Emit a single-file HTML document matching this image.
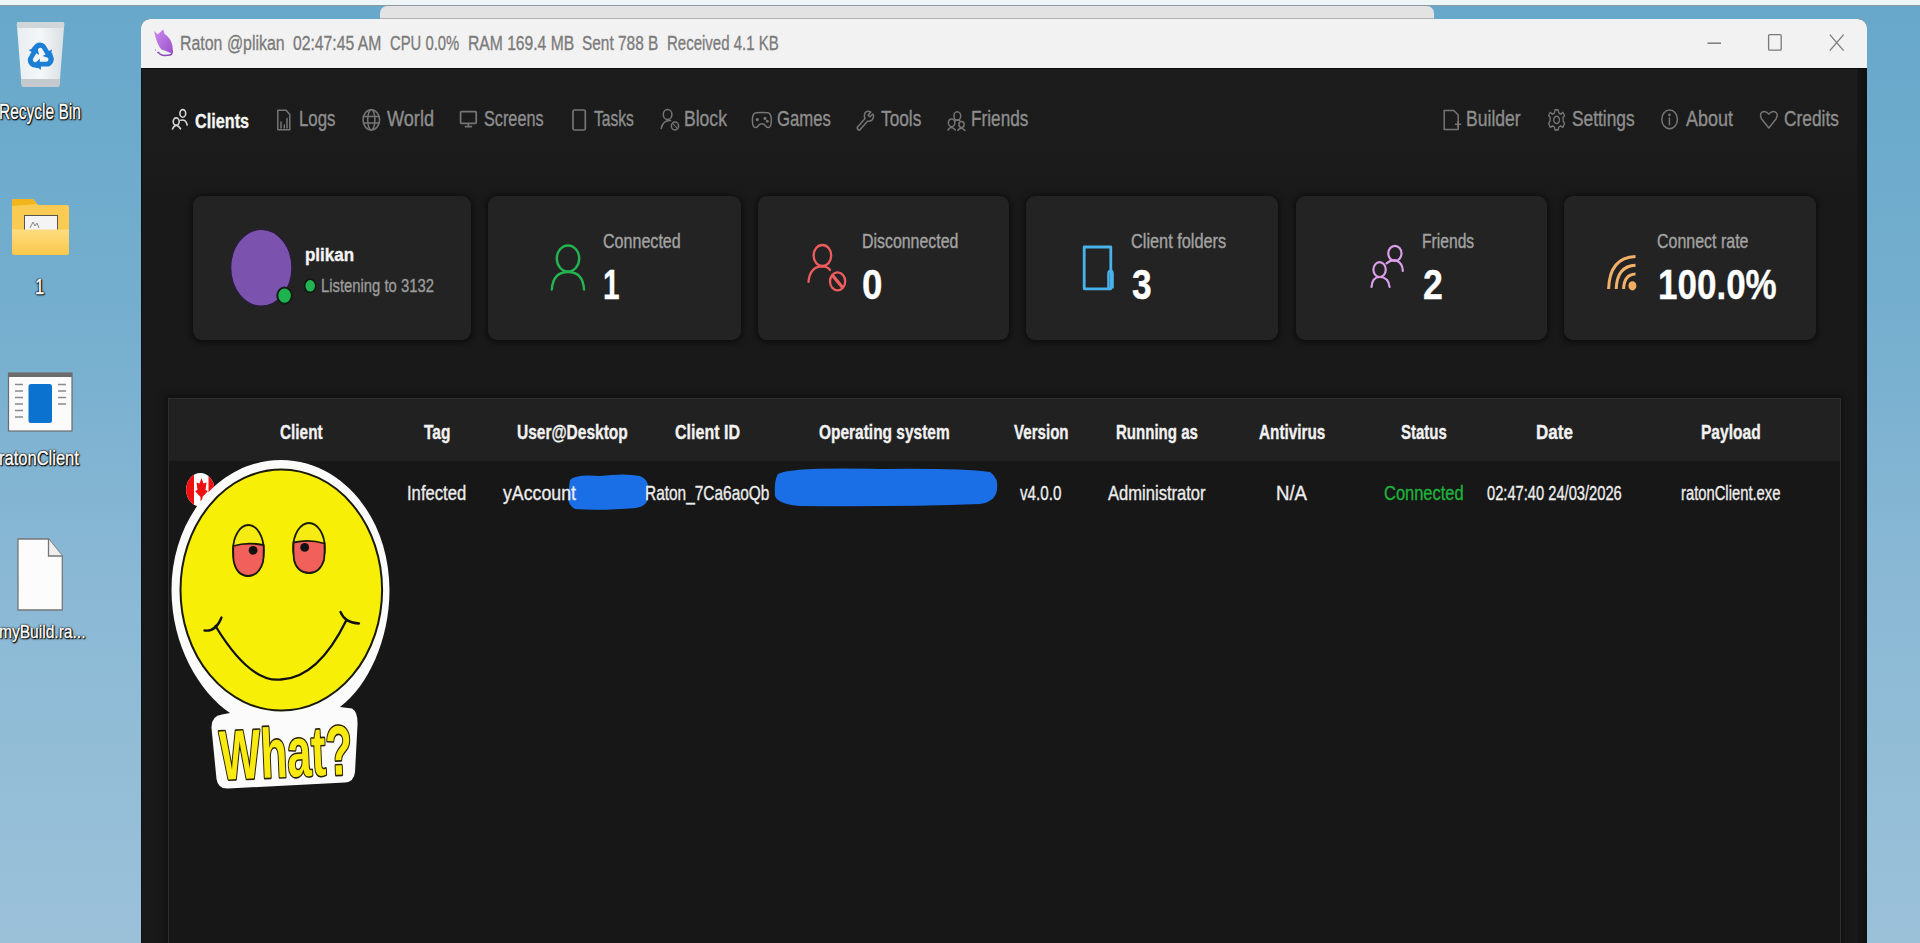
<!DOCTYPE html>
<html><head><meta charset="utf-8">
<style>
html,body{margin:0;padding:0;}
body{width:1920px;height:943px;overflow:hidden;position:relative;font-family:"Liberation Sans",sans-serif;
 background:linear-gradient(180deg,#67a8ca 0px,#74aece 300px,#8bb9d5 600px,#9bc1d9 943px);}
.a{position:absolute;}
.t{position:absolute;white-space:pre;transform-origin:0 0;font-family:"Liberation Sans",sans-serif;-webkit-text-stroke:0.35px currentColor;}
#topstrip{left:0;top:0;width:1920px;height:5px;background:#eef5f7;}
#topline{left:0;top:5px;width:1920px;height:1px;background:#8e999f;}
#behind{left:380px;top:6px;width:1054px;height:13px;background:#e3e3e3;border-radius:7px 7px 0 0;border-bottom:1px solid #b3b3b3;box-sizing:border-box;}
#win{left:141px;top:19px;width:1726px;height:924px;background:#191919;border-radius:9px 9px 0 0;overflow:hidden;}
#titlebar{left:0;top:0;width:1726px;height:49px;background:#f2f2f2;}
#darktop{left:0;top:49px;width:1726px;height:1px;background:#0b0b0b;}
#navbg{left:0;top:50px;width:1726px;height:130px;background:linear-gradient(#1c1c1c 0,#1b1b1b 100px,#191919 130px);}
#rightband{left:1716px;top:50px;width:10px;height:874px;background:linear-gradient(90deg,#161616,#101010);}
.card{position:absolute;top:196px;height:144px;background:#232323;border-radius:9px;box-shadow:0 1px 5px 2px rgba(0,0,0,.45);}
#panel{left:167.5px;top:398px;width:1673px;height:560px;background:#171717;border:1px solid #2e2e2e;box-sizing:border-box;box-shadow:0 0 6px 3px rgba(0,0,0,.35);}
#phead{left:0;top:0;width:1671px;height:62px;background:#212121;}
.blob{position:absolute;background:#1a6fe6;}
</style></head>
<body>
<div class="a" id="topstrip"></div>
<div class="a" id="topline"></div>
<div class="a" id="behind"></div>

<!-- desktop icons -->
<svg class="a" style="left:0;top:0" width="141" height="943" viewBox="0 0 141 943">
  <!-- recycle bin -->
  <defs><linearGradient id="bing" x1="0" y1="0" x2="1" y2="0"><stop offset="0" stop-color="#e9eef1"/><stop offset="0.5" stop-color="#f4f7f8"/><stop offset="1" stop-color="#d9dfe3"/></linearGradient></defs>
  <path d="M16.8 24 Q16.8 22 19 22 L62 22 Q64.3 22 64.3 24 L59.5 85 Q59.3 87 57 87 L24 87 Q21.8 87 21.6 85 Z" fill="url(#bing)"/>
  <path d="M16.8 24 Q16.8 22 19 22 L62 22 Q64.3 22 64.3 24 L64 28 L17.1 28 Z" fill="#cfd6da"/>
  <path d="M21 79 L60 79 L59.5 85 Q59.3 87 57 87 L24 87 Q21.8 87 21.6 85 Z" fill="#c3c9cd"/>
  <g transform="translate(40.5 56.5)" fill="#1c7fd6">
   <g id="rarrow"><path d="M-5 -12.5 Q0 -15.5 4.5 -12 L8.5 -5.5 L11.5 -7 L10 2 L2 -0.5 L5 -2 L1.5 -8 Q0 -9.5 -2 -8 L-4 -5 L-9 -8 Z"/></g>
   <use href="#rarrow" transform="rotate(120)"/>
   <use href="#rarrow" transform="rotate(240)"/>
  </g>
  <!-- folder -->
  <path d="M12 201 Q12 199 14 199 L33 199 L38 205 L67 205 Q69 205 69 207 L69 230 L12 230 Z" fill="#f9cb52"/><path d="M12 201 Q12 199 14 199 L33 199 L37 204 L12 206 Z" fill="#f2b51e"/>
  <rect x="24.5" y="215.5" width="33" height="16" fill="#f4f4f4" stroke="#555" stroke-width="1"/>
  <path d="M30 228 l3 -6 l2 4 l2 -3 l2 5" fill="none" stroke="#888" stroke-width="1"/>
  <defs><linearGradient id="fg" x1="0" y1="0" x2="0" y2="1"><stop offset="0" stop-color="#fddc80"/><stop offset="1" stop-color="#fbc84a"/></linearGradient></defs>
  <path d="M12 229.5 L69 229.5 L69 253 Q69 255 67 255 L14 255 Q12 255 12 253 Z" fill="url(#fg)"/>
  <!-- app icon -->
  <rect x="8.5" y="373" width="63.5" height="58" fill="#fbfbfb" stroke="#6c6c6c" stroke-width="1.2"/>
  <rect x="8.5" y="373" width="63.5" height="4" fill="#6c6c6c"/>
  <rect x="28.5" y="384" width="23.5" height="39" rx="2.5" fill="#0b72cf"/>
  <g stroke="#8a8a8a" stroke-width="1.3">
    <path d="M15 384.5h8M15 391h8M15 397.5h8M15 404h8M15 410.5h8M15 417h8"/>
    <path d="M58 384.5h8M58 391h8M58 397.5h8M58 404h8"/>
  </g>
  <!-- file icon -->
  <path d="M18 539 L48.5 539 L62.3 556 L62.3 610 L18 610 Z" fill="#fcfcfc" stroke="#767676" stroke-width="1.3"/>
  <path d="M48.5 539 L48.5 556 L62.3 556" fill="#efefef" stroke="#767676" stroke-width="1.3"/>
</svg>

<div class="a" id="win">
  <div class="a" id="titlebar"></div>
  <div class="a" id="darktop"></div>
  <div class="a" id="navbg"></div>
  <div class="a" id="rightband"></div>
  <div class="a" style="left:0;top:49px;width:1px;height:875px;background:#0d1114;"></div>
</div>

<!-- cards -->
<div class="card" style="left:192.5px;width:278.5px"></div>
<div class="card" style="left:488px;width:252.5px"></div>
<div class="card" style="left:757.5px;width:251px"></div>
<div class="card" style="left:1025.7px;width:252.3px"></div>
<div class="card" style="left:1295.5px;width:251.5px"></div>
<div class="card" style="left:1564.4px;width:251.6px"></div>

<!-- table panel -->
<div class="a" id="panel"><div class="a" id="phead"></div></div>

<!-- blobs -->
<svg class="a" style="left:560px;top:460px" width="450" height="60" viewBox="560 460 450 60">
  <path d="M570 480 Q575 474 600 476 Q625 473 640 476 Q650 480 648 492 Q650 506 636 508 Q600 511 575 509 Q567 505 568 494 Z" fill="#1a6fe6"/>
  <path d="M778 474 Q790 467 880 469 Q960 468 990 472 Q999 478 997 490 Q995 502 980 504 Q900 507 800 506 Q778 504 775 496 Q774 480 778 474 Z" fill="#1a6fe6"/>
</svg>

<svg class="a" style="left:0;top:0;pointer-events:none" width="1920" height="943" viewBox="0 0 1920 943">
 <!-- cat icon -->
 <defs><linearGradient id="catg" x1="0" y1="0" x2="1" y2="1"><stop offset="0" stop-color="#cf8af2"/><stop offset="1" stop-color="#9a52c9"/></linearGradient></defs>
 <path d="M154 31 L157.8 34.3 L163.2 29.6 L164.6 34 Q171 38 172.5 46 Q173.2 51.5 170.5 53 Q166 50.5 161.5 49.5 Q157 45 154 31 Z" fill="url(#catg)"/>
 <path d="M158.5 52.3 Q160.5 55.6 165 55.4 L170 55.1 Q172.6 54.2 172.2 50.5" fill="none" stroke="#8d4cbd" stroke-width="1.5" stroke-linecap="round"/>
 <circle cx="155.5" cy="50" r="0.6" fill="#8d4cbd"/><circle cx="157.6" cy="52.6" r="0.6" fill="#8d4cbd"/>
 <!-- window controls -->
 <g stroke="#7a7a7a" fill="none">
  <path d="M1707.5 43.2 H1721" stroke-width="1.5"/>
  <rect x="1768.6" y="34.6" width="12.6" height="15.6" rx="1.2" stroke-width="1.3"/>
  <path d="M1829.8 34.6 L1843.6 50.6 M1843.6 34.6 L1829.8 50.6" stroke-width="1.3"/>
 </g>
 <!-- nav icons -->
 <g fill="none" stroke="#d6d6d6" stroke-width="1.6" stroke-linecap="round">
  <ellipse cx="182.8" cy="113.4" rx="2.9" ry="3.8"/>
  <path d="M180.8 120.2 Q185.8 118.8 187.2 125"/>
  <ellipse cx="176.2" cy="121.6" rx="3" ry="3.7"/>
  <path d="M172.5 129 Q176 121.8 180.5 128.8"/>
 </g>
 <g fill="none" stroke="#757575" stroke-width="1.5" stroke-linejoin="round" stroke-linecap="round">
  <!-- logs -->
  <path d="M277.8 110.3 H286 L289.8 114.5 V129.8 H277.8 Z"/>
  <path d="M281 122 V128 M284.3 125 V128 M287 118.5 V128"/>
  <!-- world -->
  <ellipse cx="371.3" cy="119.8" rx="8.3" ry="10.1"/>
  <ellipse cx="371.3" cy="119.8" rx="3.6" ry="10.1"/>
  <path d="M363.5 116.6 H379 M363.5 123.1 H379"/>
  <!-- screens -->
  <rect x="460.6" y="111.6" width="15.6" height="11.8" rx="0.8" stroke-width="1.8"/>
  <path d="M468.4 124 V126.4 M465.3 126.6 H471.5" stroke-width="1.6"/>
  <!-- tasks -->
  <rect x="573" y="110" width="12.3" height="20" rx="1.6" stroke-width="1.7"/>
  <!-- block -->
  <ellipse cx="667.6" cy="114.5" rx="4.3" ry="5"/>
  <path d="M661.2 128.5 Q663 120 670.5 120.5"/>
  <ellipse cx="675" cy="126" rx="3.6" ry="4"/>
  <path d="M672.8 123.5 L677.2 128.5" stroke-width="1.1"/>
  <!-- games -->
  <path d="M756 112.8 C 760 112.3 764 112.3 767.8 112.8 C 770.5 113.3 771.3 116 771.3 120 C 771.3 124.5 770.5 127.6 768.3 127.6 C 766.5 127.6 765.5 125.5 764 124.3 C 762.5 123.6 761 123.6 759.7 124.3 C 758.2 125.5 757.2 127.6 755.4 127.6 C 753.2 127.6 752.4 124.5 752.4 120 C 752.4 116 753.2 113.3 756 112.8 Z"/>
  <circle cx="757.3" cy="119.6" r="0.9" fill="#757575"/>
  <circle cx="765" cy="118.4" r="0.8" fill="#757575"/>
  <circle cx="767.3" cy="121.2" r="0.8" fill="#757575"/>
  <!-- tools -->
  <path d="M857.2 127.5 Q857 129.8 859.5 130.2 L867.5 121.3 Q872 121.8 873.5 117.3 Q874 115 872.8 114 L870 116.8 L868 115.2 L870.8 112 Q866 110 864.5 114 Q864 117 865 118.5 Z"/>
  <!-- friends -->
  <ellipse cx="957.3" cy="116" rx="3.4" ry="4.2"/>
  <ellipse cx="951.6" cy="122.8" rx="3.2" ry="3.9"/>
  <ellipse cx="961.5" cy="124.6" rx="2.6" ry="3"/>
  <path d="M948 130 Q951 125 955.3 130 M957.8 130.3 Q961 126 965 130.5 M955 121 Q957.5 119 960 121"/>
  <!-- builder -->
  <path d="M1444.2 110.5 H1453.8 L1458.2 115 V129.6 H1444.2 Z"/>
  <path d="M1458 121.5 V127 M1455.5 124.2 H1460.5"/>
  <!-- about -->
  <ellipse cx="1669.6" cy="119.4" rx="7.8" ry="9.3"/>
  <path d="M1669.4 118 V124.8"/>
  <circle cx="1669.4" cy="114.9" r="0.6" fill="#757575"/>
  <!-- credits heart -->
  <path d="M1768.8 128 L1761.6 119 Q1759.8 116 1760.8 113.5 Q1762 111.3 1764.5 111.4 Q1767.2 111.6 1768.8 114.2 Q1770.4 111.6 1773.1 111.4 Q1775.9 111.3 1776.9 113.5 Q1777.9 116 1776 119 Z"/>
 </g>
 <!-- settings gear -->
 <g transform="translate(1556.6 119.9) scale(1 1.25)" fill="none" stroke="#757575" stroke-width="1.3" stroke-linejoin="round">
  <path id="gear" d="M-1.6 -8 L1.6 -8 L2.2 -5.6 L4.3 -4.6 L6.3 -6 L8 -3.6 L6.4 -1.8 L6.6 1 L8 2.8 L6.3 5.9 L4.1 4.8 L2.2 5.8 L1.6 8 L-1.6 8 L-2.2 5.8 L-4.1 4.8 L-6.3 5.9 L-8 2.8 L-6.6 1 L-6.4 -1.8 L-8 -3.6 L-6.3 -6 L-4.3 -4.6 L-2.2 -5.6 Z"/>
  <circle cx="0" cy="0" r="2.9"/>
 </g>

 <!-- card 1: avatar -->
 <ellipse cx="261.3" cy="267.8" rx="30.6" ry="38.3" fill="#7b52ad" stroke="#2a1c3c" stroke-width="1.2"/>
 <ellipse cx="284.6" cy="295.6" rx="7.3" ry="8.2" fill="#1fb34f" stroke="#0f1f14" stroke-width="2"/>
 <ellipse cx="310.2" cy="285.8" rx="5.6" ry="6.6" fill="#22b452" stroke="#101a12" stroke-width="1.6"/>

 <!-- card 2: connected person green -->
 <g fill="none" stroke="#24b550" stroke-width="2.4" stroke-linecap="round">
  <ellipse cx="568" cy="258.5" rx="11.2" ry="13"/>
  <path d="M551.8 289.5 Q553 272 568 272 Q583 272 584 289.5"/>
 </g>
 <!-- card 3: disconnected red -->
 <g fill="none" stroke="#ee5d5d" stroke-width="2.3" stroke-linecap="round">
  <ellipse cx="822.4" cy="255.5" rx="8.8" ry="10.5"/>
  <path d="M808.5 281.8 Q810 266.5 822.3 266.4 Q827.5 266.6 830 270"/>
  <ellipse cx="837.6" cy="281.4" rx="7.6" ry="9"/>
  <path d="M833 276 L842.2 287" stroke-width="3.4"/>
 </g>
 <!-- card 4: folder blue -->
 <g fill="none" stroke="#4ab2ea" stroke-width="2.8" stroke-linejoin="round">
  <path d="M1084.2 247 H1110.8 V288.8 H1084.2 Z"/>
  <path d="M1108.3 288.6 V274 Q1108.3 270.6 1110.6 270.6 Q1112.7 270.6 1112.7 274 V288.6" stroke-width="2.2"/>
 </g>
 <!-- card 5: friends pink -->
 <g fill="none" stroke="#dc9ee8" stroke-width="2.2" stroke-linecap="round">
  <ellipse cx="1394.9" cy="253.4" rx="6.6" ry="7.6"/>
  <path d="M1386.5 263.3 Q1393 258.5 1397 261 Q1402.5 263 1402.8 271"/>
  <ellipse cx="1379.6" cy="269.6" rx="6.2" ry="7.4"/>
  <path d="M1371.5 287 Q1372.3 277 1379.6 277 Q1388.5 277 1389.6 287"/>
 </g>
 <!-- card 6: wifi orange -->
 <g fill="none" stroke="#f2b068" stroke-width="3" stroke-linecap="butt">
  <path d="M1608.6 289 Q1609.5 257.5 1635.5 256.5"/>
  <path d="M1616.2 289 Q1617 266 1635.5 265.3"/>
  <path d="M1623.6 289 Q1624 274.5 1635.5 274"/>
 </g>
 <ellipse cx="1632.4" cy="285.8" rx="4" ry="4.6" fill="#f2ae62"/>

 <!-- canada flag -->
 <defs><clipPath id="flc"><ellipse cx="200.3" cy="489.8" rx="14.2" ry="16.7"/></clipPath></defs>
 <g clip-path="url(#flc)">
  <rect x="180" y="470" width="40" height="40" fill="#fff"/>
  <rect x="180" y="470" width="14" height="40" fill="#ee1111"/>
  <rect x="208.5" y="470" width="12" height="40" fill="#ee1111"/>
  <path d="M201.5 478 L203.5 483.5 L206.5 482.5 L205.5 490 L208 491 L202.5 497 L202.5 501 L200.5 501 L200.5 497 L195 491 L197.5 490 L196.5 482.5 L199.5 483.5 Z" fill="#ee1111"/>
 </g>
</svg>


<div class="t" style="left:180.03px;top:33.06px;font-size:20.72px;line-height:20.72px;transform:scaleX(0.7682);color:#7b7b7b;">Raton @plikan</div>
<div class="t" style="left:292.53px;top:33.06px;font-size:20.72px;line-height:20.72px;transform:scaleX(0.7592);color:#7b7b7b;">02:47:45 AM</div>
<div class="t" style="left:390.26px;top:33.06px;font-size:20.72px;line-height:20.72px;transform:scaleX(0.7150);color:#7b7b7b;">CPU 0.0%</div>
<div class="t" style="left:467.55px;top:33.06px;font-size:20.72px;line-height:20.72px;transform:scaleX(0.7557);color:#7b7b7b;">RAM 169.4 MB</div>
<div class="t" style="left:582.38px;top:33.06px;font-size:20.72px;line-height:20.72px;transform:scaleX(0.7444);color:#7b7b7b;">Sent 788 B</div>
<div class="t" style="left:666.50px;top:33.06px;font-size:20.72px;line-height:20.72px;transform:scaleX(0.7236);color:#7b7b7b;">Received 4.1 KB</div>
<div class="t" style="left:194.85px;top:109.70px;font-size:21.14px;line-height:21.14px;transform:scaleX(0.7680);color:#f4f4f4;font-weight:700;">Clients</div>
<div class="t" style="left:299.05px;top:109.44px;font-size:21.45px;line-height:21.45px;transform:scaleX(0.7859);color:#8e8e8e;">Logs</div>
<div class="t" style="left:387.00px;top:109.44px;font-size:21.45px;line-height:21.45px;transform:scaleX(0.8453);color:#8e8e8e;">World</div>
<div class="t" style="left:483.85px;top:109.44px;font-size:21.45px;line-height:21.45px;transform:scaleX(0.7579);color:#8e8e8e;">Screens</div>
<div class="t" style="left:594.39px;top:109.44px;font-size:21.45px;line-height:21.45px;transform:scaleX(0.7274);color:#8e8e8e;">Tasks</div>
<div class="t" style="left:683.60px;top:109.44px;font-size:21.45px;line-height:21.45px;transform:scaleX(0.8185);color:#8e8e8e;">Block</div>
<div class="t" style="left:776.66px;top:109.44px;font-size:21.45px;line-height:21.45px;transform:scaleX(0.7787);color:#8e8e8e;">Games</div>
<div class="t" style="left:880.65px;top:109.44px;font-size:21.45px;line-height:21.45px;transform:scaleX(0.8061);color:#8e8e8e;">Tools</div>
<div class="t" style="left:970.62px;top:109.44px;font-size:21.45px;line-height:21.45px;transform:scaleX(0.8025);color:#8e8e8e;">Friends</div>
<div class="t" style="left:1466.09px;top:109.44px;font-size:21.45px;line-height:21.45px;transform:scaleX(0.8198);color:#8e8e8e;">Builder</div>
<div class="t" style="left:1571.81px;top:109.44px;font-size:21.45px;line-height:21.45px;transform:scaleX(0.8092);color:#8e8e8e;">Settings</div>
<div class="t" style="left:1686.00px;top:109.44px;font-size:21.45px;line-height:21.45px;transform:scaleX(0.8378);color:#8e8e8e;">About</div>
<div class="t" style="left:1783.63px;top:109.44px;font-size:21.45px;line-height:21.45px;transform:scaleX(0.8079);color:#8e8e8e;">Credits</div>
<div class="t" style="left:304.98px;top:247.31px;font-size:17.95px;line-height:17.95px;transform:scaleX(0.9459);color:#f5f5f5;font-weight:700;">plikan</div>
<div class="t" style="left:320.71px;top:276.43px;font-size:18.99px;line-height:18.99px;transform:scaleX(0.7812);color:#9c9c9c;">Listening to 3132</div>
<div class="t" style="left:602.60px;top:231.15px;font-size:20.14px;line-height:20.14px;transform:scaleX(0.7985);color:#a3a3a3;">Connected</div>
<div class="t" style="left:603.21px;top:263.63px;font-size:42.14px;line-height:42.14px;transform:scaleX(0.7068);color:#fff;font-weight:700;">1</div>
<div class="t" style="left:861.93px;top:231.15px;font-size:20.14px;line-height:20.14px;transform:scaleX(0.7903);color:#a3a3a3;">Disconnected</div>
<div class="t" style="left:861.90px;top:263.63px;font-size:42.14px;line-height:42.14px;transform:scaleX(0.8717);color:#fff;font-weight:700;">0</div>
<div class="t" style="left:1131.18px;top:231.15px;font-size:20.14px;line-height:20.14px;transform:scaleX(0.8107);color:#a3a3a3;">Client folders</div>
<div class="t" style="left:1132.29px;top:263.63px;font-size:42.14px;line-height:42.14px;transform:scaleX(0.8400);color:#fff;font-weight:700;">3</div>
<div class="t" style="left:1421.75px;top:231.15px;font-size:20.14px;line-height:20.14px;transform:scaleX(0.7774);color:#a3a3a3;">Friends</div>
<div class="t" style="left:1422.63px;top:263.63px;font-size:42.14px;line-height:42.14px;transform:scaleX(0.8475);color:#fff;font-weight:700;">2</div>
<div class="t" style="left:1656.50px;top:231.15px;font-size:20.14px;line-height:20.14px;transform:scaleX(0.7940);color:#a3a3a3;">Connect rate</div>
<div class="t" style="left:1657.90px;top:263.63px;font-size:42.14px;line-height:42.14px;transform:scaleX(0.8310);color:#fff;font-weight:700;">100.0%</div>
<div class="t" style="left:280.09px;top:422.17px;font-size:20.71px;line-height:20.71px;transform:scaleX(0.7414);color:#f2f2f2;font-weight:700;">Client</div>
<div class="t" style="left:424.15px;top:422.17px;font-size:20.71px;line-height:20.71px;transform:scaleX(0.7480);color:#f2f2f2;font-weight:700;">Tag</div>
<div class="t" style="left:516.67px;top:422.17px;font-size:20.71px;line-height:20.71px;transform:scaleX(0.7492);color:#f2f2f2;font-weight:700;">User@Desktop</div>
<div class="t" style="left:674.86px;top:422.17px;font-size:20.71px;line-height:20.71px;transform:scaleX(0.7756);color:#f2f2f2;font-weight:700;">Client ID</div>
<div class="t" style="left:818.58px;top:422.17px;font-size:20.71px;line-height:20.71px;transform:scaleX(0.7471);color:#f2f2f2;font-weight:700;">Operating system</div>
<div class="t" style="left:1014.00px;top:422.17px;font-size:20.71px;line-height:20.71px;transform:scaleX(0.7299);color:#f2f2f2;font-weight:700;">Version</div>
<div class="t" style="left:1115.70px;top:422.17px;font-size:20.71px;line-height:20.71px;transform:scaleX(0.7266);color:#f2f2f2;font-weight:700;">Running as</div>
<div class="t" style="left:1259.19px;top:422.17px;font-size:20.71px;line-height:20.71px;transform:scaleX(0.7392);color:#f2f2f2;font-weight:700;">Antivirus</div>
<div class="t" style="left:1400.70px;top:422.17px;font-size:20.71px;line-height:20.71px;transform:scaleX(0.7241);color:#f2f2f2;font-weight:700;">Status</div>
<div class="t" style="left:1536.48px;top:422.17px;font-size:20.71px;line-height:20.71px;transform:scaleX(0.8211);color:#f2f2f2;font-weight:700;">Date</div>
<div class="t" style="left:1701.07px;top:422.17px;font-size:20.71px;line-height:20.71px;transform:scaleX(0.7513);color:#f2f2f2;font-weight:700;">Payload</div>
<div class="t" style="left:406.70px;top:482.62px;font-size:20.29px;line-height:20.29px;transform:scaleX(0.8205);color:#ededed;">Infected</div>
<div class="t" style="left:503.00px;top:482.62px;font-size:20.29px;line-height:20.29px;transform:scaleX(0.8742);color:#ededed;">yAccount</div>
<div class="t" style="left:645.26px;top:482.62px;font-size:20.29px;line-height:20.29px;transform:scaleX(0.7611);color:#ededed;">Raton_7Ca6aoQb</div>
<div class="t" style="left:1020.40px;top:482.87px;font-size:20.00px;line-height:20.00px;transform:scaleX(0.7589);color:#ededed;">v4.0.0</div>
<div class="t" style="left:1107.90px;top:482.62px;font-size:20.29px;line-height:20.29px;transform:scaleX(0.8167);color:#ededed;">Administrator</div>
<div class="t" style="left:1275.51px;top:482.62px;font-size:20.29px;line-height:20.29px;transform:scaleX(0.9175);color:#ededed;">N/A</div>
<div class="t" style="left:1383.68px;top:482.62px;font-size:20.29px;line-height:20.29px;transform:scaleX(0.8116);color:#1fb33a;">Connected</div>
<div class="t" style="left:1487.46px;top:482.87px;font-size:20.00px;line-height:20.00px;transform:scaleX(0.7344);color:#ededed;">02:47:40 24/03/2026</div>
<div class="t" style="left:1681.11px;top:482.87px;font-size:20.00px;line-height:20.00px;transform:scaleX(0.7391);color:#ededed;">ratonClient.exe</div>
<div class="t" style="left:-0.74px;top:101.49px;font-size:21.16px;line-height:21.16px;transform:scaleX(0.7323);color:#fff;text-shadow:0 0 1px #000,0 0 1px #000,0 0 2px #000,0 0 2px #000,1px 1px 2px #000,1px 1px 1px #000;-webkit-text-stroke:0.4px #fff;">Recycle Bin</div>
<div class="t" style="left:35.34px;top:276.12px;font-size:21.59px;line-height:21.59px;transform:scaleX(0.7683);color:#fff;text-shadow:0 0 1px #000,0 0 1px #000,0 0 2px #000,0 0 2px #000,1px 1px 2px #000,1px 1px 1px #000;-webkit-text-stroke:0.4px #fff;">1</div>
<div class="t" style="left:-0.99px;top:448.14px;font-size:20.86px;line-height:20.86px;transform:scaleX(0.7917);color:#fff;text-shadow:0 0 1px #000,0 0 1px #000,0 0 2px #000,0 0 2px #000,1px 1px 2px #000,1px 1px 1px #000;-webkit-text-stroke:0.4px #fff;">ratonClient</div>
<div class="t" style="left:-0.93px;top:622.94px;font-size:18.26px;line-height:18.26px;transform:scaleX(0.8524);color:#fff;text-shadow:0 0 1px #000,0 0 1px #000,0 0 2px #000,0 0 2px #000,1px 1px 2px #000,1px 1px 1px #000;-webkit-text-stroke:0.4px #fff;">myBuild.ra...</div>

<svg class="a" style="left:0;top:0;pointer-events:none" width="1920" height="943" viewBox="0 0 1920 943">
 <!-- white outline -->
 <path d="M281 460 C 342 460 389.5 518 389.5 590 C 389.5 640 368 686 340 707 L 352 708.5 Q 358 712 357.5 725 L 355 772 Q 354 782 345 782.5 L 228 788.5 Q 218 789 216.5 779 L 211.5 728 Q 211 716 222 714.5 L 230 713 C 199 692 171.5 645 171.5 590 C 171.5 518 220 460 281 460 Z" fill="#fbfbfb"/>
 <!-- yellow face -->
 <ellipse cx="281.3" cy="590" rx="100.8" ry="120.5" fill="#f8ef06" stroke="#1a1a0a" stroke-width="2"/>
 <!-- eyes -->
 <g stroke="#1a1a0a" stroke-width="1.8">
  <ellipse cx="248.4" cy="550.5" rx="15.4" ry="25.5" fill="#f6ec14"/>
  <path d="M233.4 546 Q247 541.5 263.6 545.2 Q264 556 263 562 Q259 575.5 248.4 576 Q236 575.5 233.5 560 Q233 552 233.4 546 Z" fill="#f2605c"/>
  <ellipse cx="309" cy="548" rx="15.8" ry="25" fill="#f6ec14"/>
  <path d="M293.5 542.5 Q309 539 324.5 543.5 Q325 552 324 560 Q320 573 309 573 Q297 572.5 294 560 Q293 550 293.5 542.5 Z" fill="#f2605c"/>
 </g>
 <circle cx="253.1" cy="550.3" r="4.4" fill="#111"/>
 <circle cx="304.7" cy="547.4" r="4.4" fill="#111"/>
 <!-- smile -->
 <g fill="none" stroke="#111" stroke-width="2.3" stroke-linecap="round">
  <path d="M215.5 626 Q250 683 281 679.5 Q318 678 346.5 620"/>
  <path d="M204.5 630.5 Q216 632 221.5 617.5"/>
  <path d="M340.5 612 Q345 623 359 623.5"/>
 </g>
 <!-- What? -->
 <g transform="rotate(-2.5 285 750)">
  <text x="219.5" y="777" font-family="Liberation Sans" font-weight="700" font-size="70" fill="#f9ea12" stroke="#2a2200" stroke-width="3.2" stroke-linejoin="round" paint-order="stroke" transform="translate(219.5 0) scale(0.62 1) translate(-219.5 0)">What?</text>
 </g>
</svg>

</body></html>
